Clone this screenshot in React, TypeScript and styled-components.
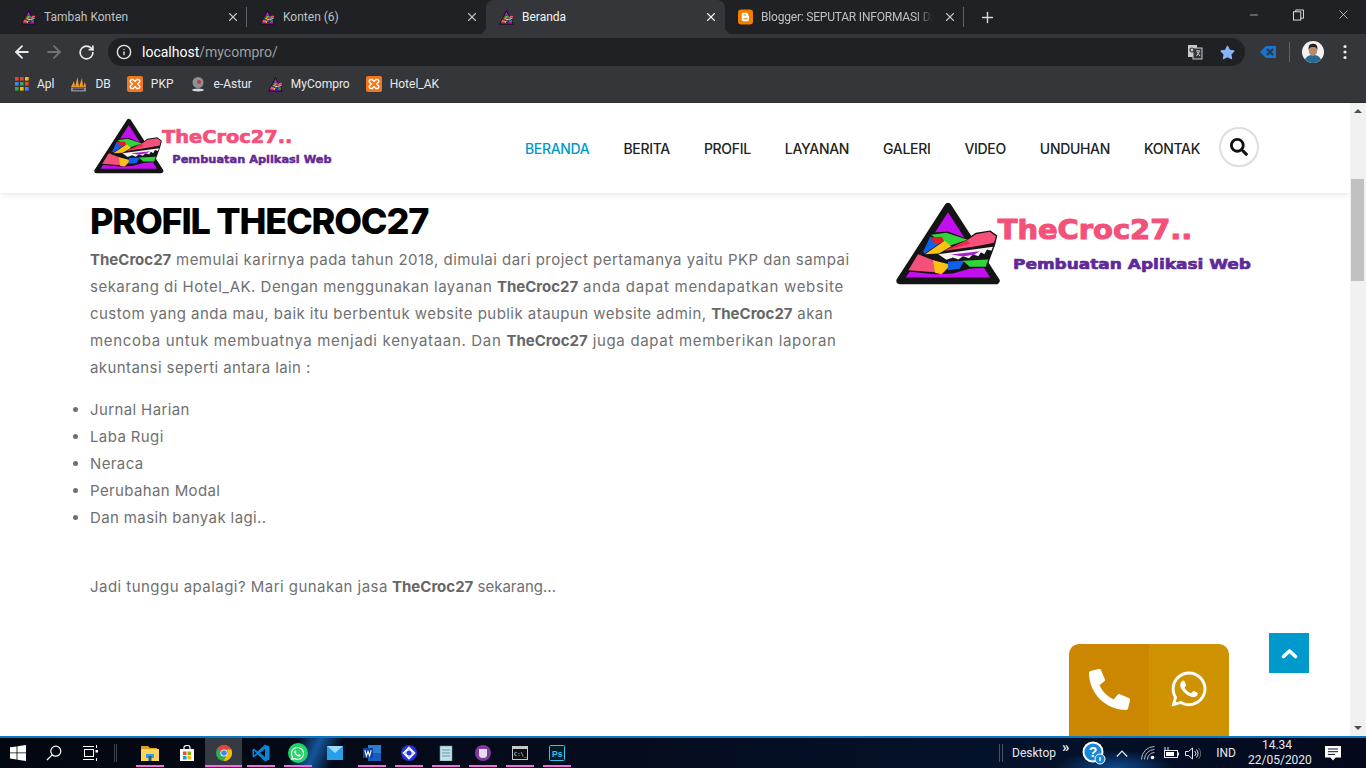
import React from "react";
import styled, { createGlobalStyle } from "styled-components";
import { ArrowLeft, ArrowRight, RotateCw, Info, X, Plus, Minus } from "lucide-react";
import { FaSearch, FaWhatsapp, FaPhoneAlt, FaStar } from "react-icons/fa";

const Global = createGlobalStyle`
  html, body { margin: 0; padding: 0; height: 100%; overflow: hidden; background: #fff; }
  * { box-sizing: border-box; }
  svg { display: block; flex-shrink: 0; }
`;

const Screen = styled.div`
  width: 1366px; height: 768px; display: flex; flex-direction: column; overflow: hidden;
  font-family: Roboto, "Liberation Sans", sans-serif;
`;
const TabStrip = styled.div`
  height: 34px; background: #202124; display: flex; padding-left: 8px; flex-shrink: 0;
`;
const Tab = styled.div<{ $active?: boolean }>`
  width: 239px; height: 34px; display: flex; align-items: center; padding: 0 7px 0 13px; position: relative;
  background: ${p => (p.$active ? "#35363a" : "transparent")};
  border-radius: ${p => (p.$active ? "8px 8px 0 0" : "0")};
  color: ${p => (p.$active ? "#f1f3f4" : "#bdc1c6")};
  ${p => p.$active ? `
    &::before, &::after { content: ""; position: absolute; bottom: 0; width: 8px; height: 8px; }
    &::before { left: -8px; background: radial-gradient(circle at 0 0, #202124 8px, #35363a 8.5px); }
    &::after { right: -8px; background: radial-gradient(circle at 100% 0, #202124 8px, #35363a 8.5px); }
  ` : ""}
`;
const TabTitle = styled.span<{ $fade?: boolean }>`
  flex: 1; margin-left: 8px; font-size: 12px; white-space: nowrap; overflow: hidden;
  margin-right: ${p => (p.$fade ? "10px" : "0")};
  ${p => p.$fade ? "letter-spacing: -0.2px; mask-image: linear-gradient(90deg, #000 90%, transparent 100%);" : ""}
`;
const TabDivider = styled.i`
  width: 1px; height: 20px; background: #5f6368; align-self: center; margin-left: -1px; position: relative; z-index: 1;
`;
const NewTab = styled.div`
  width: 46px; display: flex; align-items: center; justify-content: center; color: #d5d7da;
`;
const WindowControls = styled.div`
  margin-left: auto; display: flex; color: #e8eaed;
`;
const WindowButton = styled.div`
  width: 45px; height: 29px; display: flex; align-items: center; justify-content: center;
`;
const Toolbar = styled.div`
  height: 36px; background: #35363a; display: flex; align-items: center; padding: 0 5px 0 6px; flex-shrink: 0; color: #e8eaed;
`;
const ToolButton = styled.div<{ $dim?: boolean }>`
  width: 32px; height: 32px; display: flex; align-items: center; justify-content: center;
  color: ${p => (p.$dim ? "#6f7276" : "#e8eaed")};
`;
const StarButton = styled(ToolButton)` margin-left: 8px; `;
const ExtensionButton = styled(ToolButton)` margin-left: 7px; `;
const MenuButton = styled(ToolButton)` margin-left: 5px; `;
const AddressBar = styled.div`
  width: 1137px; height: 28px; margin-left: 6px; border-radius: 14px; background: #202124;
  display: flex; align-items: center; padding: 0 2px 0 8px;
`;
const Url = styled.div`
  margin-left: 10px; font-size: 14px; color: #fff; flex: 1;
`;
const UrlPath = styled.span` color: #9aa0a6; `;
const ToolDivider = styled.i` width: 1px; height: 20px; background: #5f6368; margin: 0 12px 0 5px; `;
const Bookmarks = styled.div`
  height: 33px; background: #35363a; display: flex; align-items: center; padding-left: 15px; gap: 16px; flex-shrink: 0;
  padding-bottom: 5px; box-shadow: inset 0 -1px 0 #2b2c2f;
`;
const Bookmark = styled.div`
  display: flex; align-items: center; gap: 8px; color: #e8eaed; font-size: 12px;
`;
const Viewport = styled.div`
  flex: 1; min-height: 0; display: flex; position: relative; overflow: hidden; background: #fff;
`;
const Page = styled.main`
  flex: 1; min-width: 0; font-family: Inter, "Liberation Sans", sans-serif;
`;
const SiteHeader = styled.header`
  height: 90px; display: flex; align-items: center; padding: 0 91px 0 92px;
  background: #fff; box-shadow: 0 2px 6px rgba(0, 0, 0, .09); position: relative;
`;
const SmallLogo = styled.div` width: 241px; height: 58px; margin-top: -5px; `;
const Nav = styled.nav`
  margin-left: auto; display: flex; align-items: center; gap: 34px;
`;
const NavLink = styled.a<{ $active?: boolean }>`
  font-size: 14px; font-weight: 500; color: ${p => (p.$active ? "#0099cc" : "#222")};
  letter-spacing: -0.32px; white-space: nowrap; text-transform: uppercase;
`;
const SearchButton = styled.div`
  width: 40px; height: 40px; border-radius: 50%; border: 2px solid #dedede; display: flex; align-items: center;
  justify-content: center; margin: -2px 0 0 -15px; color: #111;
`;
const Content = styled.div`
  display: flex; padding: 8px 0 0 90px;
`;
const Article = styled.article` width: 803px; `;
const Aside = styled.aside` width: 360px; height: 87px; margin-top: -1px; `;
const Title = styled.h1`
  margin: 0; font-size: 36px; line-height: 40px; font-weight: 800; color: #000; letter-spacing: -1.2px; white-space: nowrap;
`;
const Paragraph = styled.p`
  margin: 5px 0 0; font-size: 15px; line-height: 27px; color: #707070;
`;
const Line = styled.span<{ $track?: number }>`
  display: block; white-space: nowrap; letter-spacing: ${p => p.$track ?? 0}px;
`;
const Run = styled.span<{ $track: number }>` letter-spacing: ${p => p.$track}px; `;
const Bold = styled.b` font-weight: 700; color: #666; letter-spacing: 0; `;
const List = styled.ul`
  margin: 15px 0 0; padding: 0; list-style: disc outside; font-size: 15px; line-height: 27px; color: #707070; letter-spacing: .38px;
`;
const ListItem = styled.li``;
const Closing = styled.p`
  margin: 42px 0 0; font-size: 15px; line-height: 27px; color: #707070; white-space: nowrap;
`;
const ContactDock = styled.div`
  position: absolute; left: 1069px; top: 541px; width: 160px; height: 120px; display: flex; border-radius: 10px 10px 0 0; overflow: hidden; color: #fff;
`;
const ContactButton = styled.div<{ $tone: string }>`
  width: 80px; background: ${p => p.$tone}; display: flex; justify-content: center; padding-top: 25px;
`;
const BackToTop = styled.div`
  position: absolute; left: 1269px; top: 530px; width: 40px; height: 40px; background: #0099cc;
  display: flex; align-items: center; justify-content: center;
`;
const Scrollbar = styled.div`
  width: 16px; background: #f1f1f1; display: flex; flex-direction: column; align-items: center; justify-content: space-between;
  padding: 6px 0 6px; position: relative;
`;
const ScrollThumb = styled.div`
  position: absolute; top: 76px; left: 1px; width: 13px; height: 102px; background: #c1c1c1;
`;
const Arrow = styled.i<{ $down?: boolean }>`
  width: 0; height: 0; border-left: 4px solid transparent; border-right: 4px solid transparent;
  ${p => (p.$down ? "border-top: 4px solid #505050;" : "border-bottom: 4px solid #505050;")}
`;
const Taskbar = styled.footer`
  height: 32px; flex-shrink: 0; border-top: 2px solid #0a78c4; display: flex; align-items: center; color: #e6e9ee;
  background:
    linear-gradient(115deg, transparent 270px, #14559a 291px, transparent 312px),
    radial-gradient(ellipse 60px 18px at 1115px 30px, #0e4a90, transparent),
    linear-gradient(90deg, #03070f, #050c1d 45%, #04122c 75%, #03091a);
`;
const StartCell = styled.div<{ $w: number }>`
  width: ${p => p.$w}px; height: 30px; display: flex; align-items: center; justify-content: center; flex-shrink: 0;
`;
const TaskSep = styled.i`
  width: 3px; height: 18px; border-left: 1px solid #3c4450; border-right: 1px solid #3c4450; margin: 0 14px 0 0;
`;
const TaskSlot = styled.div<{ $on?: boolean; $open?: boolean }>`
  width: 37px; height: 30px; display: flex; align-items: center; justify-content: center; position: relative; flex-shrink: 0;
  background: ${p => (p.$on ? "rgba(255,255,255,.2)" : "transparent")};
  ${p => p.$open ? `
    &::after { content: ""; position: absolute; bottom: 1px; height: 2px; background: #ef6fd8;
      left: ${p.$on ? "0" : "5px"}; right: ${p.$on ? "0" : "4px"}; }
  ` : ""}
`;
const WhatsBadge = styled.span`
  width: 20px; height: 20px; border-radius: 50%; background: #25d366; color: #fff; display: flex; align-items: center; justify-content: center;
`;
const Tray = styled.div`
  margin-left: auto; display: flex; align-items: center; height: 30px; font-size: 12px;
`;
const TrayBars = styled.i` width: 4px; height: 18px; border-left: 1px solid #4a525e; border-right: 1px solid #4a525e; margin-right: 9px; `;
const TrayChevrons = styled.span` font-size: 15px; font-weight: 700; margin: -12px 8px 0 6px; width: 10px; `;
const TrayCell = styled.div<{ $w: number }>`
  width: ${p => p.$w}px; display: flex; align-items: center; justify-content: center; flex-shrink: 0;
`;
const Clock = styled.div` width: 58px; text-align: center; line-height: 15px; font-size: 12px; white-space: nowrap; `;

const Mark = () => (
  <g>
    <path d="M205 48 L350 272 L60 272 Z" fill="#c30fef" stroke="#141414" strokeWidth="20" strokeLinejoin="round" />
    <path d="M126 190 L150 128 L205 124 L262 146 L288 128 L332 121 L353 136 L346 165 L330 208 L322 232 L270 236 L220 250 L165 252 L85 244 Z" fill="#141414" />
    <path d="M154 134 L200 128 L264 149 L205 168 Z" fill="#2fd53a" />
    <path d="M130 186 L152 138 L180 160 L135 190 Z" fill="#1060ee" />
    <path d="M153 142 L186 140 L196 156 L165 162 Z" fill="#e01d2a" />
    <path d="M136 192 L195 152 L215 168 L178 190 Z" fill="#ffc014" />
    <path d="M195 182 L262 150 L289 132 L330 125 L349 138 L343 158 L290 168 Z" fill="#f4507a" />
    <path d="M196 180 L262 152 L272 160 L205 180 Z" fill="#f2254a" />
    <path d="M176 192 L340 170 L335 182 L322 178 L314 192 L304 186 L296 198 L280 192 L268 204 L250 198 L236 208 L220 202 L200 209 Z" fill="#f4f4f4" />
    <path d="M215 193 L300 183 L285 193 L250 199 Z" fill="#a81fd0" />
    <path d="M86 240 L115 192 L176 216 L165 246 Z" fill="#f4507a" />
    <path d="M160 210 L214 224 L186 252 L166 248 Z" fill="#ffc014" />
    <path d="M205 214 L254 212 L240 236 L204 240 Z" fill="#1060ee" />
    <path d="M250 212 L326 208 L318 230 L270 230 Z" fill="#2fd53a" />
  </g>
);

const BrandLogo = () => (
  <svg viewBox="40 30 1080 260" width="100%" height="100%" aria-label="TheCroc27">
    <Mark />
    <text x="354" y="148" fontFamily="'DejaVu Sans', sans-serif" fontWeight="700" fontSize="78" fill="#f4507a" textLength="584" lengthAdjust="spacingAndGlyphs" stroke="#f4507a" strokeWidth="3">TheCroc27..</text>
    <text x="400" y="237" fontFamily="'DejaVu Sans', sans-serif" fontWeight="700" fontSize="44" fill="#5f2a96" textLength="714" lengthAdjust="spacingAndGlyphs" stroke="#5f2a96" strokeWidth="2">Pembuatan Aplikasi Web</text>
  </svg>
);
const Favicon = () => (
  <svg viewBox="45 35 320 250" width="15" height="15" preserveAspectRatio="none"><Mark /></svg>
);
const Xampp = () => (
  <svg viewBox="0 0 16 16" width="16" height="16">
    <rect width="16" height="16" rx="2" fill="#f2761d" />
    <path d="M5 3.5 a1.8 1.8 0 0 0-1.5 2.8 L5.5 8 3.5 9.7 A1.8 1.8 0 0 0 5 12.5 H6.2 L8 10.5 9.8 12.5 H11 a1.8 1.8 0 0 0 1.5-2.8 L10.5 8 12.5 6.3 A1.8 1.8 0 0 0 11 3.5 H9.8 L8 5.5 6.2 3.5 Z" fill="none" stroke="#fff" strokeWidth="1.4" strokeLinejoin="round" />
  </svg>
);
const BloggerIcon = () => (
  <svg viewBox="0 0 16 16" width="15" height="16">
    <rect width="16" height="16" rx="3.5" fill="#f57d00" />
    <path d="M5 3.5 h4 a2 2 0 0 1 2 2 v1 l.8.6 v3.4 a2 2 0 0 1-2 2 H6 a2 2 0 0 1-2-2 V4.5 a1 1 0 0 1 1-1Z" fill="#fff" />
    <rect x="5.8" y="5.3" width="3" height="1.2" fill="#f57d00" rx=".5" />
    <rect x="5.8" y="9.3" width="4.6" height="1.2" fill="#f57d00" rx=".5" />
  </svg>
);
const AppsGrid = () => {
  const c = ["#ea4335", "#ea4335", "#fbbc04", "#4285f4", "#34a853", "#ea4335", "#34a853", "#fbbc04", "#4285f4"];
  return (
    <svg viewBox="0 0 14 14" width="14" height="14">
      {c.map((f, i) => <rect key={i} x={(i % 3) * 5} y={Math.floor(i / 3) * 5} width="3.6" height="3.6" fill={f} />)}
    </svg>
  );
};
const PmaIcon = () => (
  <svg viewBox="0 0 17 16" width="17" height="16">
    <path d="M1 11 L4 5 L5 11 L7.5 1 L9 11 L12 2 L13 11 L15 6 L16 11 Z" fill="#f09a2a" />
    <rect x="1" y="11.5" width="15" height="4" fill="#8a8f96" />
    <rect x="3" y="12.5" width="11" height="1.6" fill="#3a3d42" />
  </svg>
);
const GlobeIcon = () => (
  <svg viewBox="0 0 16 16" width="16" height="16">
    <circle cx="8" cy="6.5" r="5.5" fill="#8e9296" />
    <circle cx="9" cy="6" r="2" fill="#c23a3a" />
    <ellipse cx="8" cy="14" rx="6" ry="1.5" fill="#d8d8d8" />
  </svg>
);
const TranslateIcon = () => (
  <svg viewBox="0 0 16 16" width="16" height="16">
    <rect x="1" y="1" width="9" height="12" fill="#c8cacc" />
    <rect x="6" y="4" width="9" height="11" fill="#35363a" stroke="#c8cacc" />
    <circle cx="5" cy="6" r="2" fill="none" stroke="#35363a" strokeWidth="1.2" />
    <path d="M9 7 h4 M11 6 v1 M9.5 12 L12.5 7.5 M10 8 L13 12" stroke="#c8cacc" fill="none" />
  </svg>
);
const ExtensionIcon = () => (
  <svg viewBox="0 0 16 16" width="16" height="16">
    <path d="M0 8 L6 2 H15 a1 1 0 0 1 1 1 V13 a1 1 0 0 1-1 1 H6 Z" fill="#1774d1" />
    <path d="M7 5 L13 11 M13 5 L7 11" stroke="#35363a" strokeWidth="2" />
  </svg>
);
const AvatarPhoto = () => (
  <svg viewBox="0 0 22 22" width="22" height="22">
    <defs><clipPath id="avatar-clip"><circle cx="11" cy="11" r="11" /></clipPath></defs>
    <g clipPath="url(#avatar-clip)">
      <rect width="22" height="22" fill="#f2f2f2" />
      <path d="M2 22 C3 15 7 14 11 14 C15 14 19 15 20 22 Z" fill="#2a6a92" />
      <ellipse cx="11" cy="9.5" rx="4.2" ry="5.4" fill="#b98a6e" />
      <path d="M6.6 9 C6 3.5 9 2.8 11 2.8 C13.5 2.8 16 3.8 15.4 9 C14.6 6.5 13 6 11 6 C9 6 7.4 6.5 6.6 9Z" fill="#2b211c" />
    </g>
  </svg>
);
const Dots = () => (
  <svg viewBox="0 0 4 16" width="4" height="16" fill="#e8eaed">
    <circle cx="2" cy="2.5" r="1.6" /><circle cx="2" cy="8" r="1.6" /><circle cx="2" cy="13.5" r="1.6" />
  </svg>
);
const RestoreIcon = () => (
  <svg viewBox="0 0 12 12" width="11" height="12" fill="none" stroke="#e8eaed">
    <rect x=".5" y="2.5" width="8" height="9" /><path d="M3 2.5 V.5 H11.5 V9.5 H8.5" />
  </svg>
);
const UpChevron = () => (
  <svg viewBox="0 0 17 11" width="17" height="11" fill="none" stroke="#fff" strokeWidth="3.6" strokeLinecap="round" strokeLinejoin="round">
    <path d="M2.5 8.5 L8.5 3 L14.5 8.5" />
  </svg>
);
const WinLogo = () => (
  <svg viewBox="0 0 16 16" width="16" height="16" fill="#fff">
    <path d="M0 2.3 L6.6 1.4 V7.5 H0 Z M7.4 1.3 L16 0 V7.5 H7.4 Z M0 8.3 H6.6 V14.5 L0 13.6 Z M7.4 8.3 H16 V16 L7.4 14.7 Z" />
  </svg>
);
const SearchGlass = () => (
  <svg viewBox="0 0 16 16" width="16" height="16" fill="none" stroke="#fff" strokeWidth="1.2">
    <circle cx="9.8" cy="6.2" r="5" /><path d="M6.2 9.8 L1 15" />
  </svg>
);
const TaskView = () => (
  <svg viewBox="0 0 16 16" width="16" height="16" fill="none" stroke="#fff">
    <rect x="2.5" y="4.5" width="9" height="7" /><path d="M1 1.5 H12 M1 14.5 H12" /><path d="M14.5 0 V3 M14.5 13 V16" /><rect x="13.5" y="5" width="2.5" height="2.5" fill="#fff" stroke="none" />
  </svg>
);
const Explorer = () => (
  <svg viewBox="0 0 18 16" width="18" height="16">
    <path d="M0 1 H7 L9 3 H16 V6 H0 Z" fill="#d9a21f" /><rect y="4" width="18" height="12" fill="#fcd45a" />
    <rect x="5" y="9" width="8" height="4" fill="#2f9be0" /><rect x="7.5" y="11" width="3" height="5" fill="#1c5e9a" />
  </svg>
);
const Store = () => (
  <svg viewBox="0 0 16 16" width="16" height="16">
    <path d="M1 4 H15 V16 H1 Z" fill="#fff" /><path d="M5 5 V2.5 a3 2 0 0 1 6 0 V5" fill="none" stroke="#fff" strokeWidth="1.2" />
    <rect x="4" y="6.5" width="3.5" height="3.5" fill="#f25022" /><rect x="8.5" y="6.5" width="3.5" height="3.5" fill="#7fba00" />
    <rect x="4" y="11" width="3.5" height="3.5" fill="#00a4ef" /><rect x="8.5" y="11" width="3.5" height="3.5" fill="#ffb900" />
  </svg>
);
const ChromeIcon = () => (
  <svg viewBox="0 0 16 16" width="16" height="16">
    <circle cx="8" cy="8" r="8" fill="#34a853" />
    <path d="M8 0 a8 8 0 0 1 7.2 4.5 H8 a3.5 3.5 0 0 0-3.3 2.4 L2 2.8 A8 8 0 0 1 8 0Z" fill="#ea4335" />
    <path d="M15.2 4.5 A8 8 0 0 1 7.6 16 L11 10 a3.5 3.5 0 0 0-.4-5.5Z" fill="#fbbc04" />
    <circle cx="8" cy="8" r="3.6" fill="#fff" /><circle cx="8" cy="8" r="2.8" fill="#4285f4" />
  </svg>
);
const VsCode = () => (
  <svg viewBox="0 0 18 18" width="18" height="18">
    <path d="M13 0.5 L17.5 2.5 V15.5 L13 17.5 L5.5 10.5 L2 13.5 L0.5 12.5 V5.5 L2 4.5 L5.5 7.5 Z" fill="#0a84d6" />
    <path d="M13 5 V13 L8 9 Z" fill="#03070f" /><path d="M2.2 6.8 V11.2 L4.5 9 Z" fill="#03070f" />
  </svg>
);
const MailIcon = () => (
  <svg viewBox="0 0 16 14" width="16" height="14">
    <rect width="16" height="14" fill="#27a0e8" /><path d="M0 0 L8 7 L16 0 Z" fill="#9fdcfb" />
  </svg>
);
const WordIcon = () => (
  <svg viewBox="0 0 18 16" width="18" height="16">
    <rect x="5" y="0" width="13" height="16" fill="#2b7cd3" /><rect x="5" y="8" width="13" height="8" fill="#185abd" />
    <rect x="0" y="3" width="10" height="10" fill="#10439a" />
    <path d="M1.8 5.2 L3.4 11 L5 6.5 L6.6 11 L8.2 5.2" fill="none" stroke="#fff" strokeWidth="1.1" />
  </svg>
);
const KnotIcon = () => (
  <svg viewBox="0 0 16 16" width="16" height="16">
    <circle cx="8" cy="8" r="8" fill="#2232e0" />
    <path d="M8 2.5 L13.5 8 L8 13.5 L2.5 8 Z" fill="none" stroke="#fff" strokeWidth="1.6" />
    <circle cx="8" cy="8" r="3.2" fill="none" stroke="#fff" strokeWidth="1.2" />
  </svg>
);
const NotepadIcon = () => (
  <svg viewBox="0 0 14 16" width="14" height="16">
    <rect x="1" y="1" width="12" height="15" fill="#bfe2ea" stroke="#6f93a0" strokeWidth=".6" />
    <path d="M3 5 H11 M3 8 H11 M3 11 H11" stroke="#6f93a0" />
  </svg>
);
const PurpleIcon = () => (
  <svg viewBox="0 0 16 16" width="16" height="16">
    <circle cx="8" cy="8" r="8" fill="#7f3aa0" /><path d="M4 4 H12 V10 a4 3 0 0 1-8 0 Z" fill="#eadcf0" />
  </svg>
);
const CmdIcon = () => (
  <svg viewBox="0 0 16 14" width="16" height="14">
    <rect x=".5" y=".5" width="15" height="13" fill="#101010" stroke="#c8c8c8" />
    <rect x="1" y="1" width="14" height="2" fill="#c8c8c8" />
    <text x="2" y="10" fontSize="5.5" fill="#eee" fontFamily="'DejaVu Sans Mono', monospace">C:\_</text>
  </svg>
);
const PsIcon = () => (
  <svg viewBox="0 0 16 16" width="16" height="16">
    <rect x=".5" y=".5" width="15" height="15" rx="1" fill="#001d26" stroke="#31c5f0" />
    <text x="3" y="11.5" fontSize="8.5" fontWeight="700" fill="#31c5f0" fontFamily="'Liberation Sans', sans-serif">Ps</text>
  </svg>
);
const HelpIcon = () => (
  <svg viewBox="0 0 24 24" width="24" height="24">
    <circle cx="11" cy="11" r="10.5" fill="#fff" />
    <circle cx="11" cy="11" r="8.6" fill="#1787d6" />
    <text x="11" y="16" fontSize="14" fontWeight="700" fill="#fff" textAnchor="middle" fontFamily="'Liberation Sans', sans-serif">?</text>
    <circle cx="18" cy="18" r="5" fill="#1787d6" stroke="#fff" />
    <path d="M18 16 V20" stroke="#fff" strokeWidth="1.4" />
  </svg>
);
const Caret = () => (
  <svg viewBox="0 0 12 7" width="12" height="7" fill="none" stroke="#e6e9ee" strokeWidth="1.2"><path d="M.8 6.5 L6 1 L11.2 6.5" /></svg>
);
const Wifi = () => (
  <svg viewBox="0 0 14 14" width="14" height="14" fill="none" stroke="#b4b8be">
    <path d="M.5 13.5 A13 13 0 0 1 13.5 .5 M3.5 13.5 A10 10 0 0 1 13.5 3.5 M6.5 13.5 A7 7 0 0 1 13.5 6.5" /><circle cx="11.5" cy="11.5" r="1.8" fill="#fff" stroke="none" />
  </svg>
);
const Battery = () => (
  <svg viewBox="0 0 16 12" width="16" height="12" fill="none" stroke="#e6e9ee">
    <rect x="1.5" y="3.5" width="13" height="7" /><rect x="3" y="5" width="8" height="4" fill="#fff" stroke="none" /><path d="M2 3 V0 M5 3 V0" /><rect x="14.5" y="5.5" width="1.5" height="3" fill="#e6e9ee" stroke="none" />
  </svg>
);
const Speaker = () => (
  <svg viewBox="0 0 16 13" width="16" height="13" fill="none" stroke="#e6e9ee">
    <path d="M.5 4.5 H3.5 L7.5 1 V12 L3.5 8.5 H.5 Z" /><path d="M9.5 4 a3 3 0 0 1 0 5 M11.5 2.5 a6 6 0 0 1 0 8" /><path d="M13.5 1 a8 8 0 0 1 0 11" stroke="#666" />
  </svg>
);
const Notify = () => (
  <svg viewBox="0 0 16 15" width="16" height="15">
    <path d="M0 0 H16 V11.5 H10.5 L8 14.5 L5.5 11.5 H0 Z" fill="#fff" />
    <path d="M3 3 H13 M3 5.7 H13 M3 8.4 H10" stroke="#0a1020" />
  </svg>
);

const navItems = ["Beranda", "Berita", "Profil", "Layanan", "Galeri", "Video", "Unduhan", "Kontak"];
const listItems = ["Jurnal Harian", "Laba Rugi", "Neraca", "Perubahan Modal", "Dan masih banyak lagi.."];

export default function App() {
  return (
    <Screen>
      <Global />
      <TabStrip>
        <Tab><Favicon /><TabTitle>Tambah Konten</TabTitle><X size={14} strokeWidth={2} /></Tab>
        <TabDivider />
        <Tab><Favicon /><TabTitle>Konten (6)</TabTitle><X size={14} strokeWidth={2} /></Tab>
        <Tab $active><Favicon /><TabTitle>Beranda</TabTitle><X size={14} strokeWidth={2} /></Tab>
        <Tab><BloggerIcon /><TabTitle $fade>Blogger: SEPUTAR INFORMASI DAN TEKNOLOGI</TabTitle><X size={14} strokeWidth={2} /></Tab>
        <TabDivider />
        <NewTab><Plus size={17} strokeWidth={2} /></NewTab>
        <WindowControls>
          <WindowButton><Minus size={12} strokeWidth={1.3} /></WindowButton>
          <WindowButton><RestoreIcon /></WindowButton>
          <WindowButton><X size={15} strokeWidth={1.1} /></WindowButton>
        </WindowControls>
      </TabStrip>
      <Toolbar>
        <ToolButton><ArrowLeft size={20} strokeWidth={2.2} /></ToolButton>
        <ToolButton $dim><ArrowRight size={20} strokeWidth={2.2} /></ToolButton>
        <ToolButton><RotateCw size={17} strokeWidth={2.4} /></ToolButton>
        <AddressBar>
          <Info size={16} strokeWidth={2} />
          <Url>localhost<UrlPath>/mycompro/</UrlPath></Url>
          <TranslateIcon />
          <StarButton><FaStar size={15} color="#8ab4f8" /></StarButton>
        </AddressBar>
        <ExtensionButton><ExtensionIcon /></ExtensionButton>
        <ToolDivider />
        <AvatarPhoto />
        <MenuButton><Dots /></MenuButton>
      </Toolbar>
      <Bookmarks>
        <Bookmark><AppsGrid />Apl</Bookmark>
        <Bookmark><PmaIcon />DB</Bookmark>
        <Bookmark><Xampp />PKP</Bookmark>
        <Bookmark><GlobeIcon />e-Astur</Bookmark>
        <Bookmark><Favicon />MyCompro</Bookmark>
        <Bookmark><Xampp />Hotel_AK</Bookmark>
      </Bookmarks>
      <Viewport>
        <Page>
          <SiteHeader>
            <SmallLogo><BrandLogo /></SmallLogo>
            <Nav>
              {navItems.map((n, i) => <NavLink key={n} $active={i === 0}>{n}</NavLink>)}
              <SearchButton><FaSearch size={18} /></SearchButton>
            </Nav>
          </SiteHeader>
          <Content>
            <Article>
              <Title>PROFIL THECROC27</Title>
              <Paragraph>
                <Line $track={0.47}><Bold>TheCroc27</Bold> memulai karirnya pada tahun 2018, dimulai dari project pertamanya yaitu PKP dan sampai</Line>
                <Line $track={0.49}>sekarang di Hotel_AK. Dengan menggunakan layanan <Bold>TheCroc27</Bold> <Run $track={0.72}>anda dapat mendapatkan website</Run></Line>
                <Line $track={0.46}>custom yang anda mau, baik itu berbentuk website publik ataupun website admin, <Bold>TheCroc27</Bold> akan</Line>
                <Line $track={0.68}>mencoba untuk membuatnya menjadi kenyataan. Dan <Bold>TheCroc27</Bold> juga dapat memberikan laporan</Line>
                <Line $track={0.42}>akuntansi seperti antara lain :</Line>
              </Paragraph>
              <List>
                {listItems.map(t => <ListItem key={t}>{t}</ListItem>)}
              </List>
              <Closing><Run $track={0.46}>Jadi tunggu apalagi? Mari gunakan jasa</Run> <Bold>TheCroc27</Bold> sekarang...</Closing>
            </Article>
            <Aside><BrandLogo /></Aside>
          </Content>
        </Page>
        <Scrollbar>
          <Arrow />
          <ScrollThumb />
          <Arrow $down />
        </Scrollbar>
        <ContactDock>
          <ContactButton $tone="#cb8700"><FaPhoneAlt size={41} /></ContactButton>
          <ContactButton $tone="#cf9200"><FaWhatsapp size={40} /></ContactButton>
        </ContactDock>
        <BackToTop><UpChevron /></BackToTop>
      </Viewport>
      <Taskbar>
        <StartCell $w={35}><WinLogo /></StartCell>
        <StartCell $w={38}><SearchGlass /></StartCell>
        <StartCell $w={33}><TaskView /></StartCell>
        <StartCell $w={8} />
        <TaskSep />
        <TaskSlot $open><Explorer /></TaskSlot>
        <TaskSlot><Store /></TaskSlot>
        <TaskSlot $on $open><ChromeIcon /></TaskSlot>
        <TaskSlot $open><VsCode /></TaskSlot>
        <TaskSlot $open><WhatsBadge><FaWhatsapp size={15} /></WhatsBadge></TaskSlot>
        <TaskSlot><MailIcon /></TaskSlot>
        <TaskSlot $open><WordIcon /></TaskSlot>
        <TaskSlot $open><KnotIcon /></TaskSlot>
        <TaskSlot $open><NotepadIcon /></TaskSlot>
        <TaskSlot $open><PurpleIcon /></TaskSlot>
        <TaskSlot $open><CmdIcon /></TaskSlot>
        <TaskSlot $open><PsIcon /></TaskSlot>
        <Tray>
          <TrayBars />
          <span>Desktop</span>
          <TrayChevrons>»</TrayChevrons>
          <TrayCell $w={28}><HelpIcon /></TrayCell>
          <TrayCell $w={28}><Caret /></TrayCell>
          <TrayCell $w={24}><Wifi /></TrayCell>
          <TrayCell $w={22}><Battery /></TrayCell>
          <TrayCell $w={22}><Speaker /></TrayCell>
          <TrayCell $w={44}>IND</TrayCell>
          <Clock>14.34<br />22/05/2020</Clock>
          <TrayCell $w={54}><Notify /></TrayCell>
          <TrayCell $w={6} />
        </Tray>
      </Taskbar>
    </Screen>
  );
}
